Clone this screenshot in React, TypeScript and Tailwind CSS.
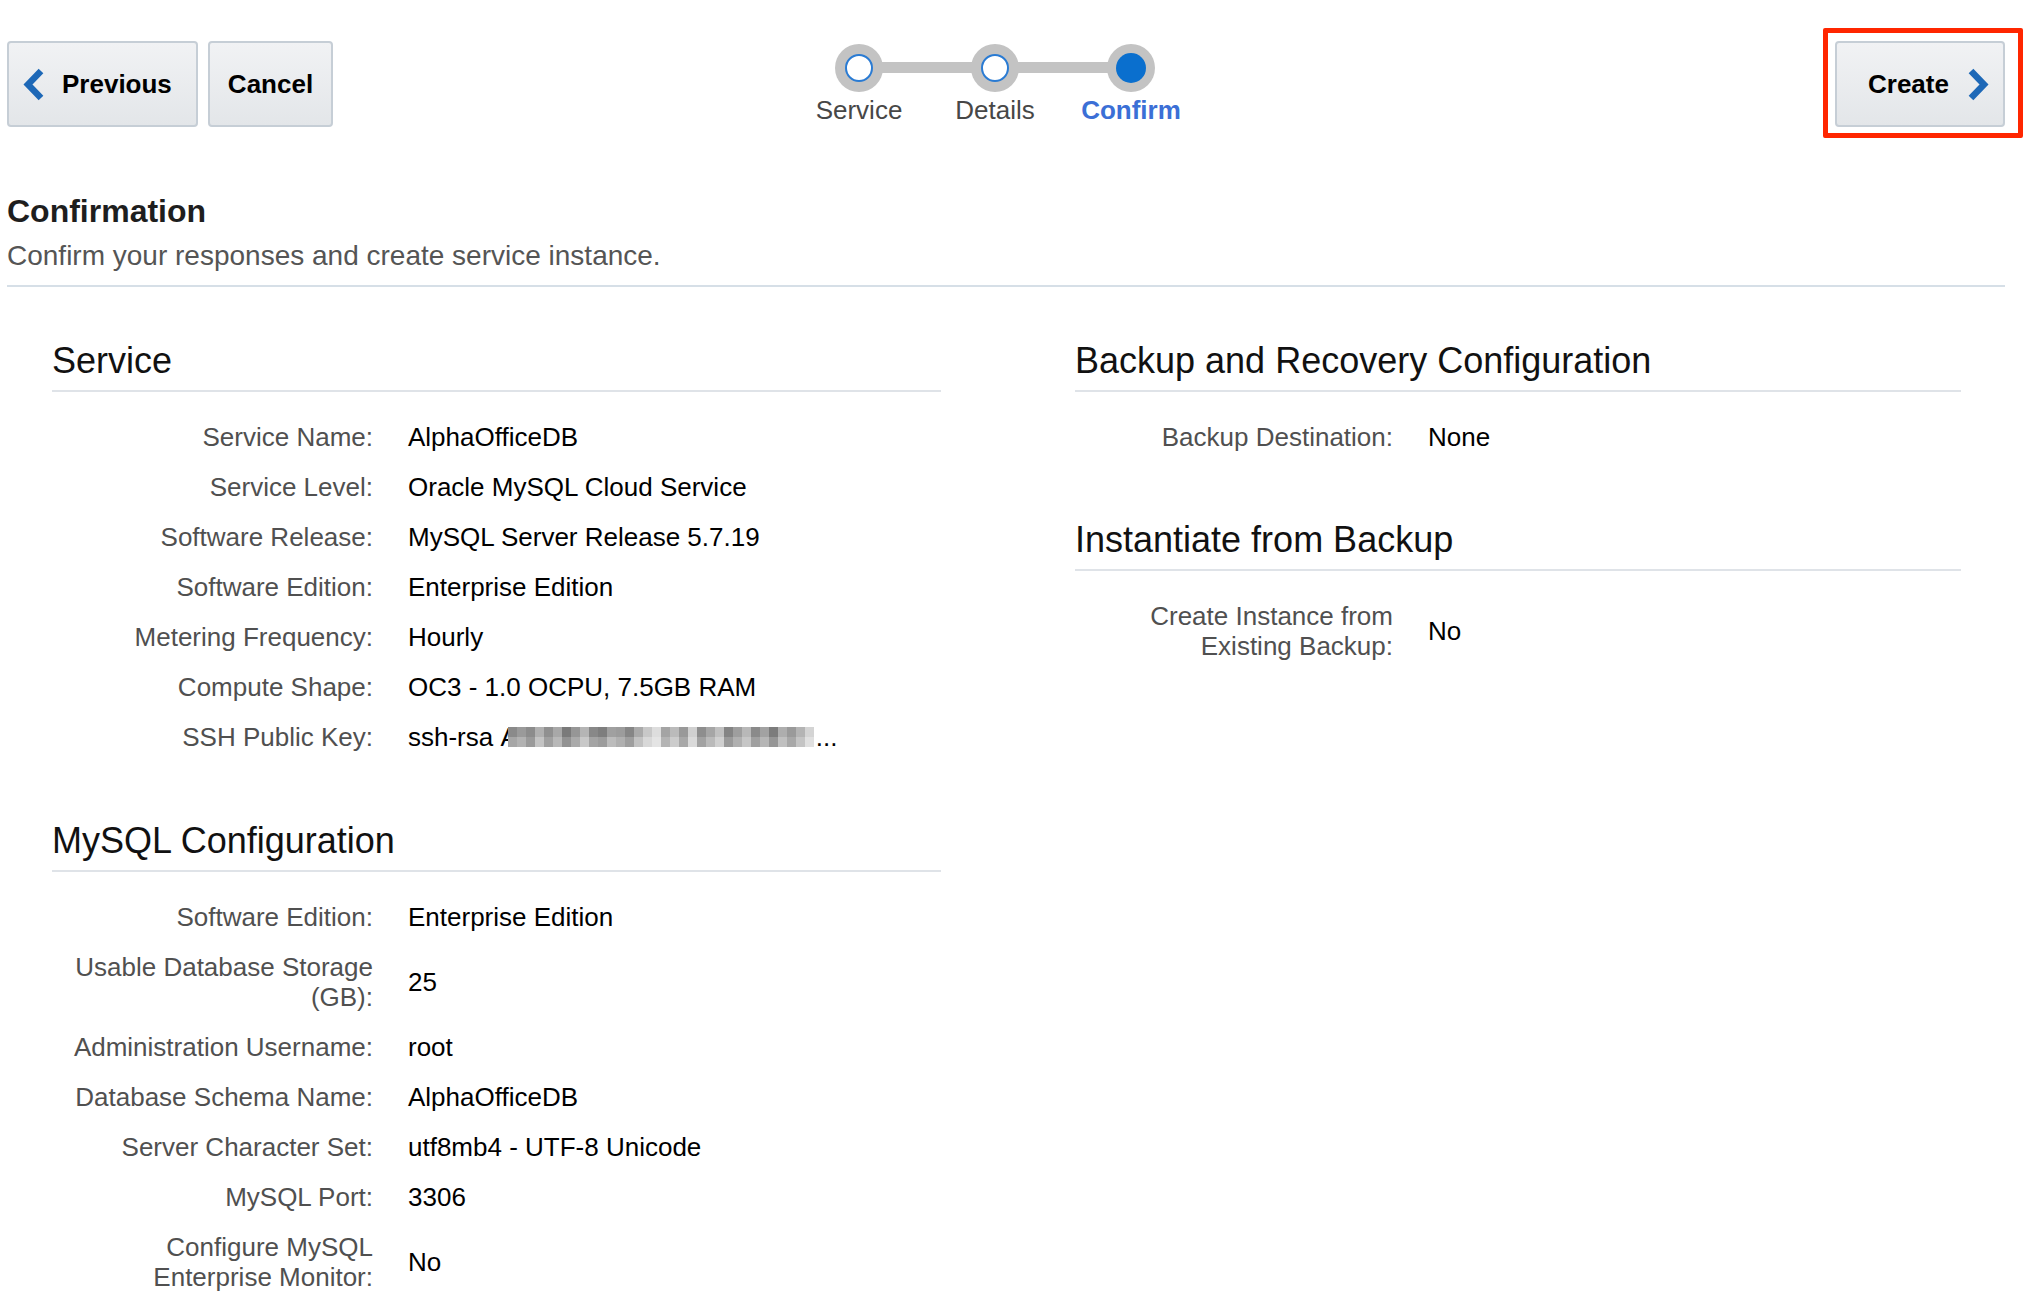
import React from 'react';

// Confirm step of the "Create Service" wizard.

interface Row {
  label: string;
  value: React.ReactNode;
}

const BLUR_TOP = [
  '#8a8a8a', '#9a9a9a', '#8c8c8c', '#b0b0b0', '#909090', '#a8a8a8', '#7a7a7a', '#969696',
  '#b5b5b5', '#888888', '#7e7e7e', '#a0a0a0', '#9c9c9c', '#868686', '#aaaaaa', '#c8c8c8',
  '#dddddd', '#a4a4a4', '#bbbbbb', '#999999', '#d0d0d0', '#8e8e8e', '#a6a6a6', '#c0c0c0',
  '#848484', '#9e9e9e', '#b8b8b8', '#8a8a8a', '#a2a2a2', '#7c7c7c', '#aeaeae', '#9a9a9a',
  '#b4b4b4', '#d4d4d4',
];
const BLUR_BOTTOM = [
  '#a6a6a6', '#b2b2b2', '#9a9a9a', '#c4c4c4', '#a0a0a0', '#b8b8b8', '#929292', '#aaaaaa',
  '#c8c8c8', '#a4a4a4', '#9c9c9c', '#bcbcbc', '#b0b0b0', '#9e9e9e', '#c2c2c2', '#d8d8d8',
  '#e4e4e4', '#b4b4b4', '#cccccc', '#a8a8a8', '#dadada', '#a2a2a2', '#bababa', '#d0d0d0',
  '#9a9a9a', '#b0b0b0', '#c6c6c6', '#a0a0a0', '#b6b6b6', '#969696', '#c0c0c0', '#a8a8a8',
  '#c4c4c4', '#e0e0e0',
];

function BlurredKey() {
  return (
    <span className="inline-flex items-center">
      ssh-rsa&nbsp;A
      <span className="relative -ml-[10px] grid h-[20px] grid-cols-[repeat(34,9px)] grid-rows-[repeat(2,10px)] bg-[#b0b0b0]">
        {BLUR_TOP.map((c, i) => (
          <span key={`t${i}`} style={{ backgroundColor: c }} />
        ))}
        {BLUR_BOTTOM.map((c, i) => (
          <span key={`b${i}`} style={{ backgroundColor: c }} />
        ))}
      </span>
      <span className="ml-[2px]">...</span>
    </span>
  );
}

const SERVICE_ROWS: Row[] = [
  { label: 'Service Name:', value: 'AlphaOfficeDB' },
  { label: 'Service Level:', value: 'Oracle MySQL Cloud Service' },
  { label: 'Software Release:', value: 'MySQL Server Release 5.7.19' },
  { label: 'Software Edition:', value: 'Enterprise Edition' },
  { label: 'Metering Frequency:', value: 'Hourly' },
  { label: 'Compute Shape:', value: 'OC3 - 1.0 OCPU, 7.5GB RAM' },
  { label: 'SSH Public Key:', value: <BlurredKey /> },
];

const MYSQL_ROWS: Row[] = [
  { label: 'Software Edition:', value: 'Enterprise Edition' },
  { label: 'Usable Database Storage (GB):', value: '25' },
  { label: 'Administration Username:', value: 'root' },
  { label: 'Database Schema Name:', value: 'AlphaOfficeDB' },
  { label: 'Server Character Set:', value: 'utf8mb4 - UTF-8 Unicode' },
  { label: 'MySQL Port:', value: '3306' },
  { label: 'Configure MySQL Enterprise Monitor:', value: 'No' },
];

const BACKUP_ROWS: Row[] = [{ label: 'Backup Destination:', value: 'None' }];

const INSTANTIATE_ROWS: Row[] = [
  { label: 'Create Instance from Existing Backup:', value: 'No' },
];

function Section({
  title,
  rows,
  labelPad,
  className = '',
}: {
  title: string;
  rows: Row[];
  labelPad: string;
  className?: string;
}) {
  return (
    <section className={className}>
      <h2 className="border-b-2 border-[#dfe3e8] pb-[8px] text-[36px] leading-[43px] text-[#111]">
        {title}
      </h2>
      <div className="pt-[20px]">
        {rows.map((r) => (
          <div key={r.label} className={`flex items-center py-[10px] ${labelPad}`}>
            <div className="w-[300px] text-right text-[26px] leading-[30px] text-[#505050]">
              {r.label}
            </div>
            <div className="ml-[35px] text-[26px] leading-[30px] text-black">{r.value}</div>
          </div>
        ))}
      </div>
    </section>
  );
}

function Chevron({ dir }: { dir: 'left' | 'right' }) {
  const pts = dir === 'left' ? '18,3 5,16.5 18,30' : '4,3 17,16.5 4,30';
  return (
    <svg width="22" height="33" viewBox="0 0 22 33" className="shrink-0">
      <polyline
        points={pts}
        fill="none"
        stroke="#1d68b7"
        strokeWidth="6.5"
        strokeLinejoin="miter"
        strokeLinecap="butt"
      />
    </svg>
  );
}

const btn =
  'flex h-[86px] items-center rounded-[4px] border-2 border-[#c6ced6] bg-gradient-to-b from-[#f1f2f4] to-[#e3e6e9] text-[26px] font-bold text-black';

function StepDot({ state }: { state: 'done' | 'current' }) {
  return (
    <div className="relative z-10 flex h-[48px] w-[48px] items-center justify-center rounded-full bg-[#c3c3c3]">
      {state === 'done' ? (
        <div className="h-[28px] w-[28px] rounded-full border-[2.5px] border-[#2a7bd3] bg-white" />
      ) : (
        <div className="h-[30px] w-[30px] rounded-full bg-[#0a6fce]" />
      )}
    </div>
  );
}

const STEPS = [
  { label: 'Service', state: 'done' as const },
  { label: 'Details', state: 'done' as const },
  { label: 'Confirm', state: 'current' as const },
];

export default function App() {
  return (
    <div className="min-h-[1296px] w-[2040px] bg-white font-['Liberation_Sans',Arial,Helvetica,sans-serif]">
      {/* Wizard toolbar */}
      <div className="flex w-[2005px] items-start pl-[7px] pt-[41px]">
        <button type="button" className={`${btn} w-[191px] pl-[14px]`}>
          <Chevron dir="left" />
          <span className="ml-[17px]">Previous</span>
        </button>
        <button type="button" className={`${btn} ml-[10px] w-[125px] justify-center`}>
          Cancel
        </button>

        <div className="relative ml-[458px] mt-[3px] flex">
          <div className="absolute left-[68px] right-[68px] top-[18px] h-[11px] bg-[#c3c3c3]" />
          {STEPS.map((s) => (
            <div key={s.label} className="flex w-[136px] flex-col items-center">
              <StepDot state={s.state} />
              <span
                className={`mt-[3px] text-[26px] leading-[30px] ${
                  s.state === 'current' ? 'font-bold text-[#3b6fd6]' : 'text-[#474747]'
                }`}
              >
                {s.label}
              </span>
            </div>
          ))}
        </div>

        <div className="relative ml-auto">
          <button type="button" className={`${btn} w-[170px] pl-[31px]`}>
            <span>Create</span>
            <span className="ml-[18px]">
              <Chevron dir="right" />
            </span>
          </button>
          <div className="pointer-events-none absolute -bottom-[11px] -left-[12px] -right-[18px] -top-[13px] rounded-[2px] border-[5px] border-[#ff2600]" />
        </div>
      </div>

      {/* Page header */}
      <div className="ml-[7px] mt-[66px] w-[1998px] border-b-2 border-[#d6dfe7] pb-[13px]">
        <h1 className="text-[32px] font-bold leading-[36px] text-[#1e1e1e]">Confirmation</h1>
        <p className="mt-[11px] text-[28px] leading-[32px] text-[#555]">
          Confirm your responses and create service instance.
        </p>
      </div>

      {/* Summary columns */}
      <div className="mt-[52px] flex">
        <div className="ml-[52px] w-[889px]">
          <Section title="Service" rows={SERVICE_ROWS} labelPad="pl-[21px]" />
          <Section
            title="MySQL Configuration"
            rows={MYSQL_ROWS}
            labelPad="pl-[21px]"
            className="mt-[57px]"
          />
        </div>
        <div className="ml-[134px] w-[886px]">
          <Section title="Backup and Recovery Configuration" rows={BACKUP_ROWS} labelPad="pl-[18px]" />
          <Section
            title="Instantiate from Backup"
            rows={INSTANTIATE_ROWS}
            labelPad="pl-[18px]"
            className="mt-[56px]"
          />
        </div>
      </div>
    </div>
  );
}
